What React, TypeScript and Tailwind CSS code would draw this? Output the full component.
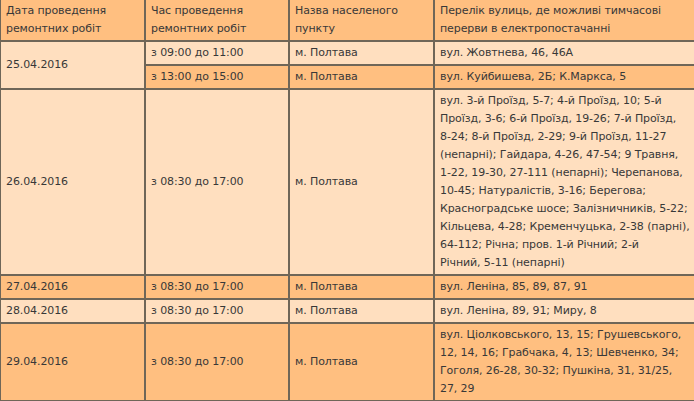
// Графік планових відключень електроенергії, м. Полтава
// Table of scheduled power outages

type Slot = {
  time: string;
  city: string;
  streets: string[];
};

type Day = {
  date: string;
  tone: 'light' | 'dark';
  slots: Slot[];
};

const schedule: Day[] = [
  {
    date: '25.04.2016',
    tone: 'light',
    slots: [
      { time: 'з 09:00 до 11:00', city: 'м. Полтава', streets: ['вул. Жовтнева, 46, 46А'] },
      { time: 'з 13:00 до 15:00', city: 'м. Полтава', streets: ['вул. Куйбишева, 2Б; К.Маркса, 5'] },
    ],
  },
  {
    date: '26.04.2016',
    tone: 'light',
    slots: [
      {
        time: 'з 08:30 до 17:00',
        city: 'м. Полтава',
        streets: [
          'вул. 3-й Проїзд, 5-7; 4-й Проїзд, 10; 5-й',
          'Проїзд, 3-6; 6-й Проїзд, 19-26; 7-й Проїзд,',
          '8-24; 8-й Проїзд, 2-29; 9-й Проїзд, 11-27',
          '(непарні); Гайдара, 4-26, 47-54; 9 Травня,',
          '1-22, 19-30, 27-111 (непарні); Черепанова,',
          '10-45; Натуралістів, 3-16; Берегова;',
          'Красноградське шосе; Залізничників, 5-22;',
          'Кільцева, 4-28; Кременчуцька, 2-38 (парні),',
          '64-112; Річна; пров. 1-й Річний; 2-й',
          'Річний, 5-11 (непарні)',
        ],
      },
    ],
  },
  {
    date: '27.04.2016',
    tone: 'dark',
    slots: [{ time: 'з 08:30 до 17:00', city: 'м. Полтава', streets: ['вул. Леніна, 85, 89, 87, 91'] }],
  },
  {
    date: '28.04.2016',
    tone: 'light',
    slots: [{ time: 'з 08:30 до 17:00', city: 'м. Полтава', streets: ['вул. Леніна, 89, 91; Миру, 8'] }],
  },
  {
    date: '29.04.2016',
    tone: 'dark',
    slots: [
      {
        time: 'з 08:30 до 17:00',
        city: 'м. Полтава',
        streets: [
          'вул. Ціолковського, 13, 15; Грушевського,',
          '12, 14, 16; Грабчака, 4, 13; Шевченко, 34;',
          'Гоголя, 26-28, 30-32; Пушкіна, 31, 31/25,',
          '27, 29',
        ],
      },
    ],
  },
];

const cell = 'border-r-2 border-b-2 border-[#6f6658] px-[5px] py-[2px] align-middle whitespace-nowrap';
const first = 'border-l border-[#6f6658]';

function Lines({ lines }: { lines: string[] }) {
  return (
    <>
      {lines.map((l, i) => (
        <span key={i}>
          {l}
          {i < lines.length - 1 && <br />}
        </span>
      ))}
    </>
  );
}

export default function App() {
  return (
    <div className="w-[694px] h-[401px] overflow-hidden bg-white">
      <table
        className="table-fixed border-separate border-spacing-0 text-[11px] leading-[18px] tracking-[-0.1px] text-[#383838]"
        style={{ fontFamily: '"DejaVu Sans", Verdana, sans-serif', width: 697 }}
      >
        <thead>
          <tr className="bg-[#ffbf80]">
            <th className={`${cell} ${first} w-[146px] text-left font-normal`}>
              Дата проведення
              <br />
              ремонтних робіт
            </th>
            <th className={`${cell} w-[144px] text-left font-normal`}>
              Час проведення
              <br />
              ремонтних робіт
            </th>
            <th className={`${cell} w-[145px] text-left font-normal`}>
              Назва населеного
              <br />
              пункту
            </th>
            <th className={`${cell} w-[262px] text-left font-normal`}>
              Перелік вулиць, де можливі тимчасові
              <br />
              перерви в електропостачанні
            </th>
          </tr>
        </thead>
        <tbody>
          {schedule.map((day) =>
            day.slots.map((slot, i) => {
              // second slot of 25.04 is highlighted in the darker tone
              const rowTone =
                day.tone === 'dark' || (day.slots.length > 1 && i === 1) ? 'bg-[#ffbf80]' : 'bg-[#ffdfbf]';
              return (
                <tr key={day.date + i}>
                  {i === 0 && (
                    <td
                      rowSpan={day.slots.length}
                      className={`${cell} ${first} ${day.tone === 'dark' ? 'bg-[#ffbf80]' : 'bg-[#ffdfbf]'}`}
                    >
                      {day.date}
                    </td>
                  )}
                  <td className={`${cell} ${rowTone}`}>{slot.time}</td>
                  <td className={`${cell} ${rowTone}`}>{slot.city}</td>
                  <td className={`${cell} ${rowTone}`}>
                    <Lines lines={slot.streets} />
                  </td>
                </tr>
              );
            })
          )}
        </tbody>
      </table>
    </div>
  );
}
